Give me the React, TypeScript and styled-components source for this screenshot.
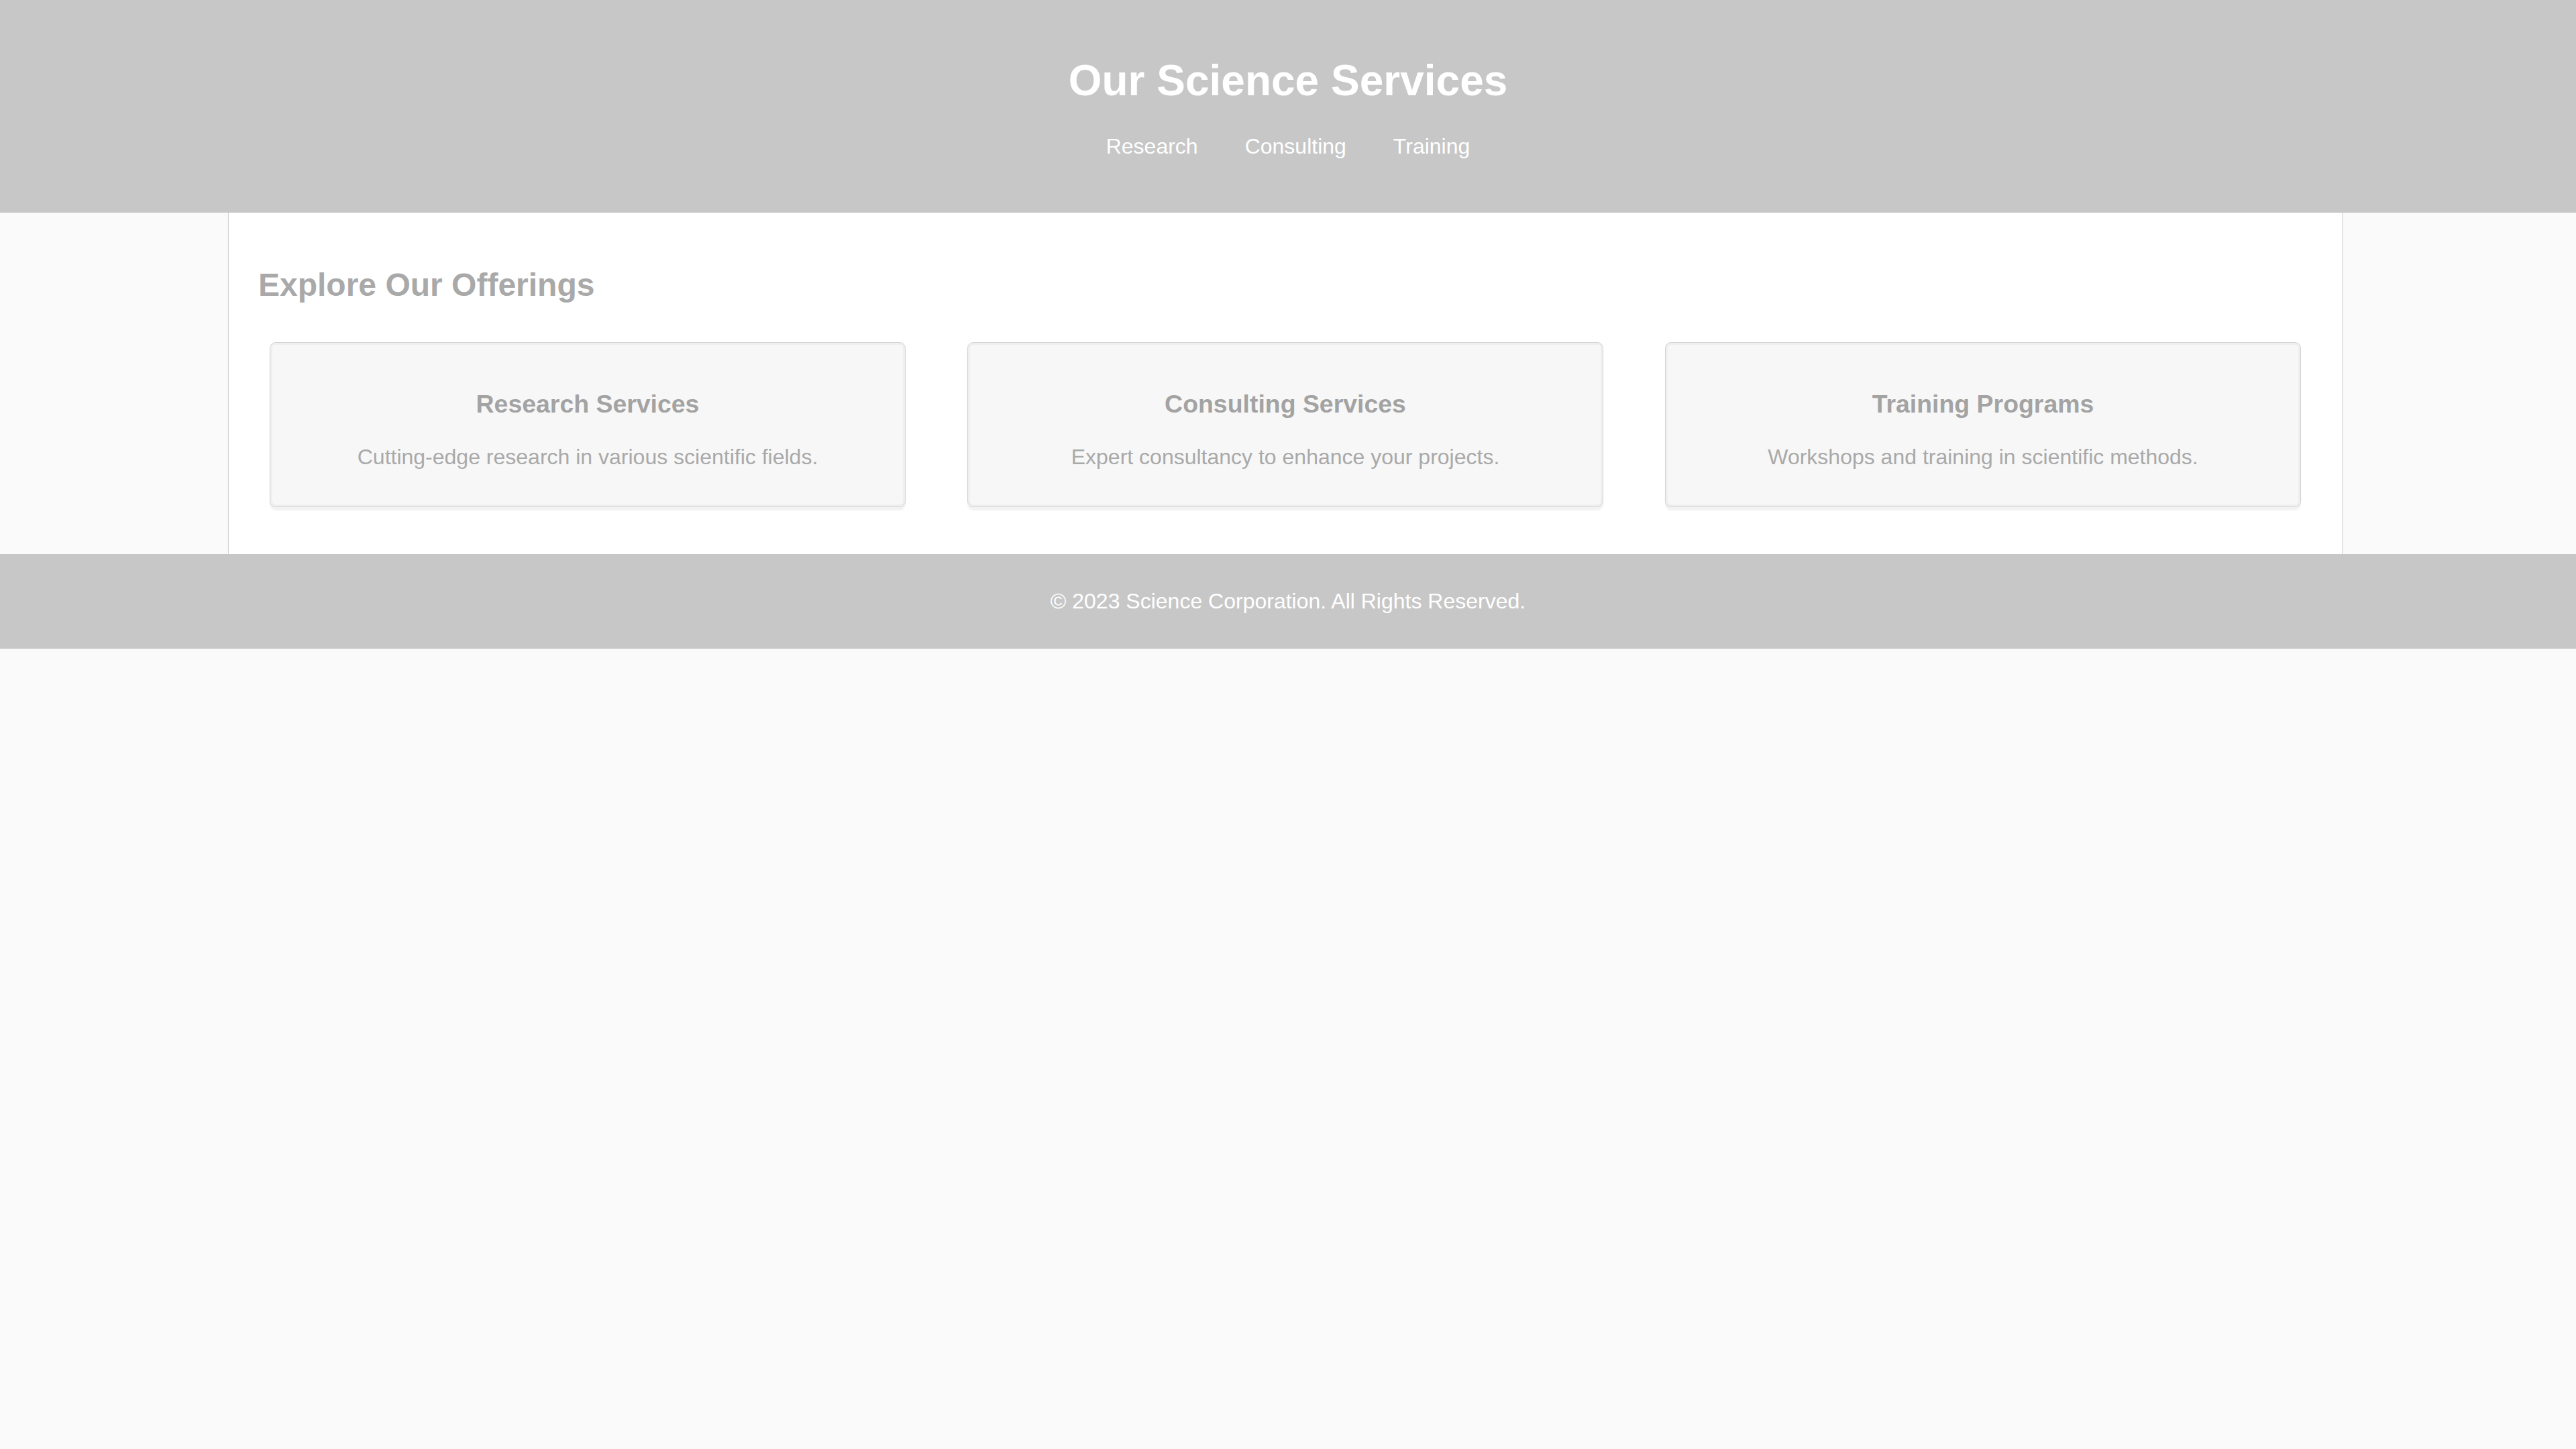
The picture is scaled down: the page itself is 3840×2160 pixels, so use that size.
import React from "react";
import styled, { createGlobalStyle } from "styled-components";

const GlobalStyle = createGlobalStyle`
  html, body {
    margin: 0;
    padding: 0;
    background: #fafafa;
    font-family: "Liberation Sans", Arial, sans-serif;
  }
  * { box-sizing: border-box; }
`;

const Page = styled.div`
  display: flex;
  flex-direction: column;
  min-height: 100vh;
  background: #fafafa;
`;

const Header = styled.header`
  background: #c7c7c7;
  color: #ffffff;
  text-align: center;
  padding: 83px 0 80px;
  display: flex;
  flex-direction: column;
  align-items: center;
`;

const Title = styled.h1`
  margin: 0;
  font-size: 64px;
  line-height: 74px;
  font-weight: 700;
  color: #ffffff;
`;

const Nav = styled.nav`
  margin-top: 43px;
  display: flex;
  gap: 70px;
  justify-content: center;
`;

const NavLink = styled.a`
  font-size: 32px;
  line-height: 37px;
  color: #ffffff;
  text-decoration: none;
  cursor: pointer;
`;

const Main = styled.main`
  width: 3152px;
  margin-left: 340px;
  background: #ffffff;
  border-left: 1px solid #d4d4d4;
  border-right: 1px solid #d4d4d4;
  box-shadow: 0 0 6px rgba(0, 0, 0, 0.025);
  padding: 80px 40px 70px;
`;

const SectionTitle = styled.h2`
  margin: 0 0 58px 4px;
  font-size: 48px;
  line-height: 55px;
  font-weight: 700;
  color: #a9a9a9;
`;

const CardGrid = styled.div`
  display: grid;
  grid-template-columns: repeat(3, 948px);
  justify-content: space-between;
  padding: 0 21px;
`;

const Card = styled.div`
  background: #f7f7f7;
  border: 1px solid #d3d3d3;
  border-radius: 9px;
  box-shadow: inset 0 0 0 3px #efefef, 0 5px 2px rgba(0, 0, 0, 0.05);
  padding: 70px 40px 55px;
  text-align: center;
  height: 246px;
`;

const CardTitle = styled.h3`
  margin: 0 0 39px;
  font-size: 37.44px;
  line-height: 43px;
  font-weight: 700;
  color: #a3a3a3;
`;

const CardText = styled.p`
  margin: 0;
  font-size: 32px;
  line-height: 37px;
  color: #a9a9a9;
`;

const Footer = styled.footer`
  background: #c7c7c7;
  color: #ffffff;
  text-align: center;
  padding: 52px 0;
`;

const FooterText = styled.p`
  margin: 0;
  font-size: 32px;
  line-height: 37px;
`;

const services = [
  { title: "Research Services", text: "Cutting-edge research in various scientific fields." },
  { title: "Consulting Services", text: "Expert consultancy to enhance your projects." },
  { title: "Training Programs", text: "Workshops and training in scientific methods." },
];

export default function App() {
  return (
    <>
      <GlobalStyle />
      <Page>
        <Header>
          <Title>Our Science Services</Title>
          <Nav>
            <NavLink>Research</NavLink>
            <NavLink>Consulting</NavLink>
            <NavLink>Training</NavLink>
          </Nav>
        </Header>
        <Main>
          <SectionTitle>Explore Our Offerings</SectionTitle>
          <CardGrid>
            {services.map((s) => (
              <Card key={s.title}>
                <CardTitle>{s.title}</CardTitle>
                <CardText>{s.text}</CardText>
              </Card>
            ))}
          </CardGrid>
        </Main>
        <Footer>
          <FooterText>© 2023 Science Corporation. All Rights Reserved.</FooterText>
        </Footer>
      </Page>
    </>
  );
}
